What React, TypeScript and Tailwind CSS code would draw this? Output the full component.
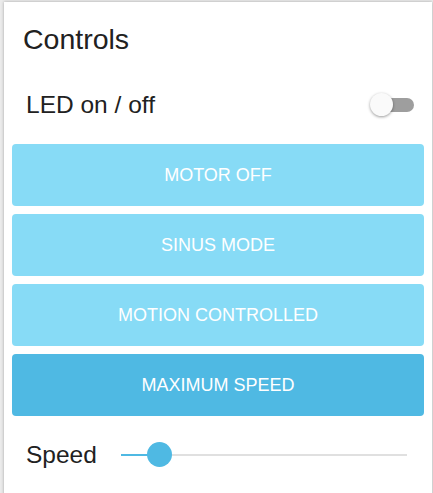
import React from "react";

const Btn = ({ label, active }: { label: string; active?: boolean }) => (
  <div
    className={
      "h-[62px] rounded-[4px] flex items-center justify-center text-white text-[18px] leading-none " +
      (active ? "bg-[#4fb9e3]" : "bg-[#87dbf6]")
    }
  >
    {label}
  </div>
);

export default function App() {
  return (
    <div className="w-[433px] h-[493px] bg-[#ebebeb] pl-[4px] pt-[2px] pr-[1px] overflow-hidden">
      <div className="bg-white h-[540px] shadow-[0_0_3px_rgba(0,0,0,0.3)] font-['Liberation_Sans',Arial,sans-serif] text-[#212121]">
        <div className="pt-[21px] pl-[19px] text-[28.5px] leading-[32px]">Controls</div>
        <div className="mt-[34px] pl-[22px] pr-[18px] flex items-center justify-between h-[32px]">
          <span className="text-[24.5px] leading-[32px]">LED on / off</span>
          <div className="relative w-[44px] h-[24px]">
            <div className="absolute right-0 top-[5px] w-[38px] h-[14px] rounded-full bg-[#9e9e9e]" />
            <div className="absolute left-0 top-0 w-[23px] h-[23px] rounded-full bg-[#fafafa] shadow-[0_1px_3px_rgba(0,0,0,0.4)]" />
          </div>
        </div>
        <div className="mt-[23px] px-[8px] flex flex-col gap-[8px]">
          <Btn label="MOTOR OFF" />
          <Btn label="SINUS MODE" />
          <Btn label="MOTION CONTROLLED" />
          <Btn label="MAXIMUM SPEED" active />
        </div>
        <div className="mt-[23px] pl-[22px] flex items-center h-[32px]">
          <span className="text-[24.5px] leading-[32px]">Speed</span>
          <div className="relative ml-[24px] w-[286px] h-[26px]">
            <div className="absolute left-0 right-0 top-[12px] h-[2px] bg-[#e0e0e0]" />
            <div className="absolute left-0 top-[12px] w-[38px] h-[2px] bg-[#4fb9e3]" />
            <div className="absolute left-[26px] top-0 w-[25px] h-[25px] rounded-full bg-[#4fb9e3]" />
          </div>
        </div>
      </div>
    </div>
  );
}
